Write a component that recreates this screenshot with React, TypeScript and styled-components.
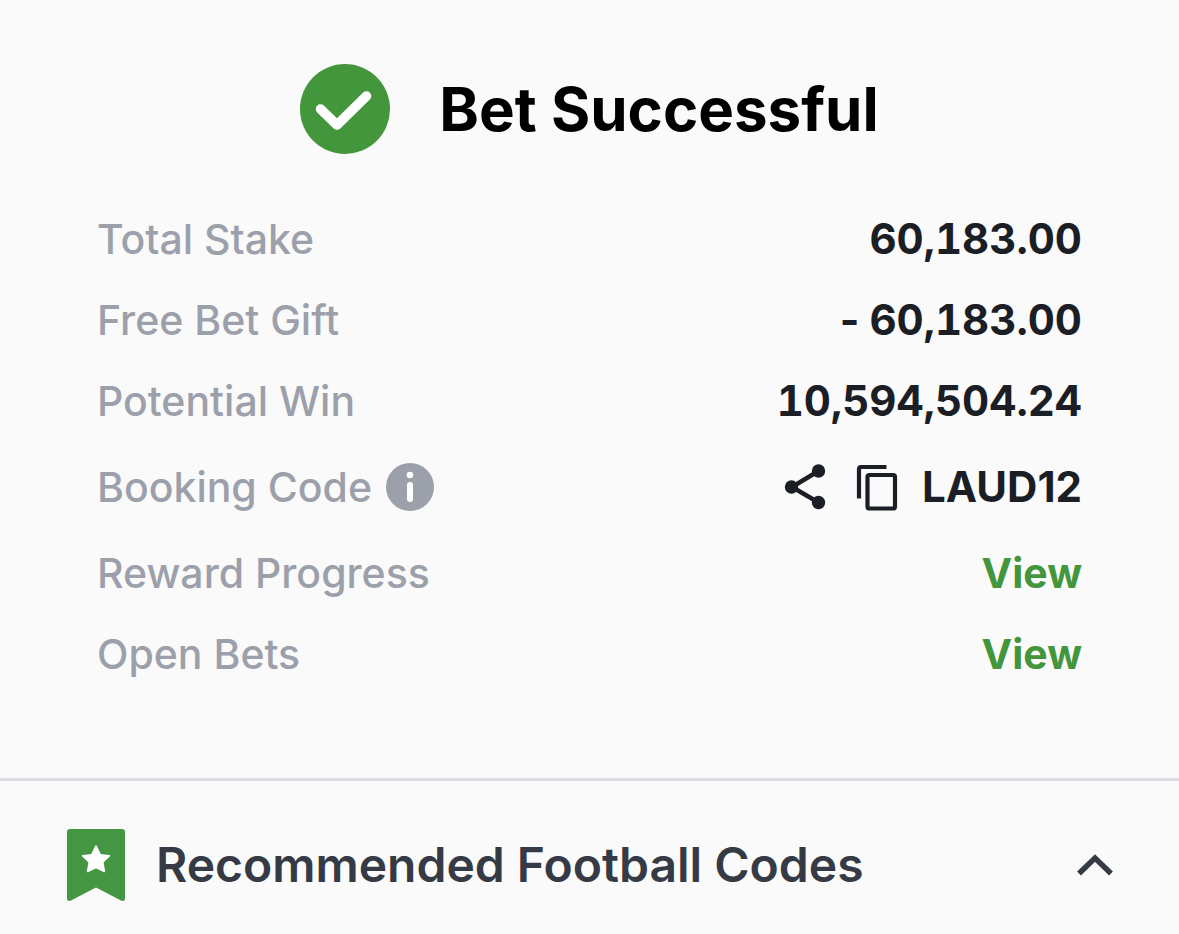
import React from "react";
import styled, { createGlobalStyle } from "styled-components";

const GlobalStyle = createGlobalStyle`
  * { box-sizing: border-box; }
  body {
    margin: 0;
    background: #fafafa;
    font-family: Inter, "Liberation Sans", sans-serif;
  }
  button { font: inherit; color: inherit; background: none; border: 0; padding: 0; margin: 0; cursor: pointer; }
  svg { display: block; flex: none; }
`;

const Header = styled.header`
  display: flex;
  align-items: center;
  justify-content: center;
  gap: 49px;
  padding: 64px 32px 44px;
`;

const Title = styled.h1`
  margin: 0;
  font-size: 60px;
  line-height: 90px;
  font-weight: 700;
  color: #000;
`;

const Details = styled.dl`
  margin: 0;
  padding: 0 97px 84px;
`;

const Row = styled.div<{ $tall?: boolean }>`
  display: flex;
  align-items: center;
  justify-content: space-between;
  min-height: ${(p) => (p.$tall ? 91 : 81)}px;
  font-size: 41px;
  line-height: 48px;
`;

const Label = styled.dt`
  display: flex;
  align-items: center;
  gap: 14px;
  font-weight: 500;
  color: #9ca0ab;
`;

const Value = styled.dd`
  display: flex;
  align-items: center;
  margin: 0;
  font-size: 42px;
  font-weight: 700;
  white-space: pre;
  color: #1b1e25;
`;

const Amount = styled.span`
  font-variant-numeric: tabular-nums;
`;

const IconButton = styled.button<{ $gap?: number }>`
  margin-right: ${(p) => p.$gap ?? 0}px;
`;

const ViewLink = styled.a`
  font-size: 41px;
  color: #43963b;
  text-decoration: none;
`;

const Recommended = styled.button`
  display: flex;
  align-items: center;
  width: 100%;
  padding: 48px 65px 32px 66px;
  border-top: 3px solid #dcdee3;
  text-align: left;
`;

const RecommendedTitle = styled.span`
  flex: 1;
  margin-left: 30px;
  font-size: 48px;
  line-height: 72px;
  font-weight: 600;
  color: #353a45;
`;

const CheckIcon = () => (
  <svg width="90" height="90" viewBox="0 0 90 90" aria-hidden="true">
    <circle cx="45" cy="45" r="45" fill="#43963b" />
    <path d="M20.500 45 37 61 66.500 32" fill="none" stroke="#fff" strokeWidth="9.500" strokeLinecap="round" strokeLinejoin="round" />
  </svg>
);

const InfoIcon = () => (
  <svg width="48" height="48" viewBox="0 0 48 48" aria-hidden="true">
    <circle cx="24" cy="24" r="24" fill="#9ca0ab" />
    <circle cx="24" cy="12" r="3.300" fill="#fff" />
    <path d="M24 22v14" stroke="#fff" strokeWidth="6" strokeLinecap="round" />
  </svg>
);

const ShareIcon = () => (
  <svg width="42" height="48" viewBox="0 0 42 48" aria-hidden="true">
    <path d="M34.500 8 8 24l26.500 15.500" fill="none" stroke="#1b1e25" strokeWidth="4.500" />
    <circle cx="34.500" cy="8" r="6.700" fill="#1b1e25" />
    <circle cx="7.500" cy="24" r="6.700" fill="#1b1e25" />
    <circle cx="34.500" cy="39.500" r="6.700" fill="#1b1e25" />
  </svg>
);

const CopyIcon = () => (
  <svg width="42" height="48" viewBox="0 0 42 48" fill="none" stroke="#1b1e25" strokeWidth="4.200" aria-hidden="true">
    <path d="M3 35.500V6q0-2 2-2h25.500" />
    <rect x="11.500" y="12" width="27.500" height="33.500" rx="2" />
  </svg>
);

const BookmarkIcon = () => (
  <svg width="60" height="72" viewBox="0 0 60 72" aria-hidden="true">
    <path d="M4 0h52q3 0 3 3v66q0 4-4 2.500L30 58.500 5 71.500Q1 73 1 69V3q0-3 3-3Z" fill="#449642" />
    <path d="m30 17 4.300 8.700 9.200 1-6.700 6.600 1.700 9.200L30 38.500l-8.500 4 1.700-9.200-6.700-6.600 9.200-1Z" fill="#fff" stroke="#fff" strokeWidth="1.500" strokeLinejoin="round" />
  </svg>
);

const ChevronIcon = () => (
  <svg width="38" height="24" viewBox="0 0 38 24" aria-hidden="true">
    <path d="M3 20.500 19 5l16 15.500" fill="none" stroke="#353a45" strokeWidth="5.500" />
  </svg>
);

export default function App() {
  return (
    <main>
      <GlobalStyle />
      <Header>
        <CheckIcon />
        <Title>Bet Successful</Title>
      </Header>
      <Details>
        <Row><Label>Total Stake</Label><Value><Amount>60,183.00</Amount></Value></Row>
        <Row><Label>Free Bet Gift</Label><Value>{"- "}<Amount>60,183.00</Amount></Value></Row>
        <Row><Label>Potential Win</Label><Value><Amount>10,594,504.24</Amount></Value></Row>
        <Row $tall>
          <Label>
            Booking Code
            <IconButton type="button" aria-label="About booking codes"><InfoIcon /></IconButton>
          </Label>
          <Value>
            <IconButton type="button" aria-label="Share" $gap={30}><ShareIcon /></IconButton>
            <IconButton type="button" aria-label="Copy code" $gap={24}><CopyIcon /></IconButton>
            LAUD12
          </Value>
        </Row>
        <Row><Label>Reward Progress</Label><Value><ViewLink href="#reward-progress">View</ViewLink></Value></Row>
        <Row><Label>Open Bets</Label><Value><ViewLink href="#open-bets">View</ViewLink></Value></Row>
      </Details>
      <Recommended type="button" aria-expanded="true">
        <BookmarkIcon />
        <RecommendedTitle>Recommended Football Codes</RecommendedTitle>
        <ChevronIcon />
      </Recommended>
    </main>
  );
}
